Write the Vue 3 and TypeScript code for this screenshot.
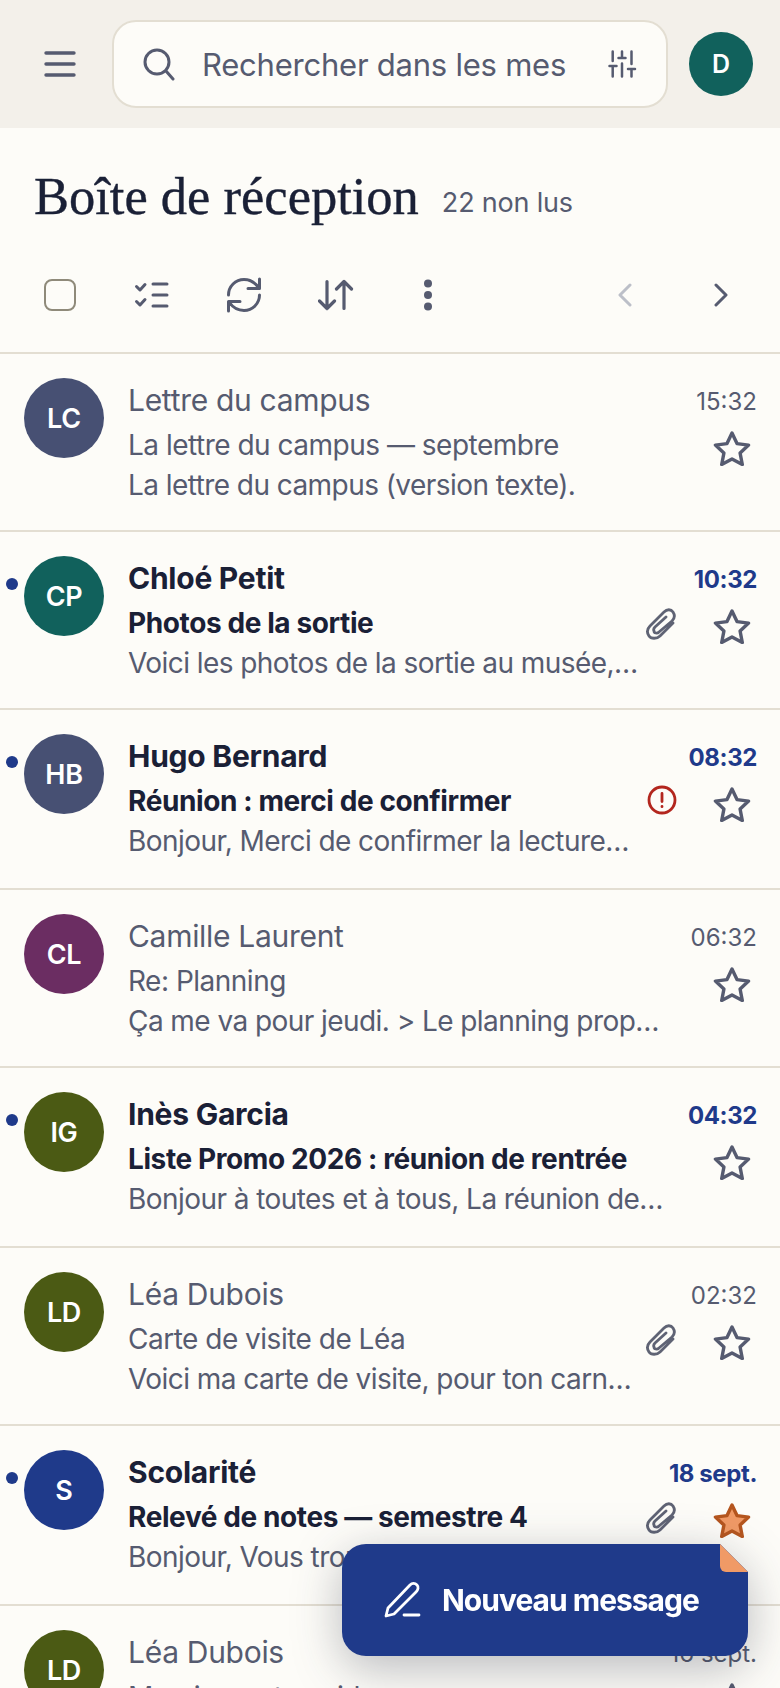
<template>
  <div class="app">
    <header class="topbar">
      <button class="icon-btn menu" aria-label="Menu">
        <svg width="32" height="28" viewBox="0 0 32 28"><path d="M2 3h28M2 14h28M2 25h28" stroke="#565b70" stroke-width="3.4" stroke-linecap="round" fill="none" /></svg>
      </button>
      <div class="search">
        <svg width="34" height="34" viewBox="0 0 34 34" fill="none" stroke="#565b70" stroke-width="3" stroke-linecap="round"><circle cx="15" cy="15" r="12" /><path d="M24 24l7 8" /></svg>
        <span class="search-text">Rechercher dans les mes</span>
        <svg class="sliders" width="30" height="28" viewBox="0 0 30 28" fill="none" stroke="#565b70" stroke-width="2.5" stroke-linecap="round"><path d="M4.7 1.500v9.500M1.500 16h7M4.700 16v10.500M14 1.500V8M10.500 8h7M14 13.500v13M23.500 1.500V14M20 19h7M23.500 19v7.500" /></svg>
      </div>
      <div class="me">D</div>
    </header>

    <section class="heading">
      <h1>Boîte de réception</h1>
      <span class="unread">22 non lus</span>
    </section>

    <div class="toolbar">
      <span class="tool"><span class="checkbox"></span></span>
      <span class="tool">
        <svg width="36" height="28" viewBox="0 0 36 28" fill="none" stroke="#565b70" stroke-width="3" stroke-linecap="round" stroke-linejoin="round"><path d="M2.500 5.500L6 9l5-5.500M2.500 20.500L6 24l5-5.500M19 3h14M19 14h14M19 25h14" /></svg>
      </span>
      <span class="tool">
        <svg width="36" height="36" viewBox="0 0 36 36" fill="none" stroke="#565b70" stroke-width="3" stroke-linecap="round" stroke-linejoin="round"><path d="M2.500 18C2.500 9.500 9.500 2.500 18 2.500c6.500 0 11.500 3.500 15 8.500M33.500 18c0 8.500-7 15.500-15.500 15.500-6.500 0-11.500-3.500-15-8.500M33.500 2v9.500H22M2.500 34V24.500H14" /></svg>
      </span>
      <span class="tool">
        <svg width="36" height="32" viewBox="0 0 36 32" fill="none" stroke="#565b70" stroke-width="3.2" stroke-linecap="round" stroke-linejoin="round"><path d="M9 2.500v27M1.500 22L9 29.500 16.500 22M26 29.500v-27M18.500 10L26 2.500 33.500 10" /></svg>
      </span>
      <span class="tool">
        <svg width="10" height="32" viewBox="0 0 10 32" fill="#565b70"><circle cx="5" cy="4.500" r="4" /><circle cx="5" cy="16" r="4" /><circle cx="5" cy="27.500" r="4" /></svg>
      </span>
      <span class="pager">
        <svg width="14" height="24" viewBox="0 0 14 24" fill="none" stroke="#bcbfc8" stroke-width="3" stroke-linecap="round" stroke-linejoin="round"><path d="M12 2L2 12l10 10" /></svg>
        <svg width="14" height="24" viewBox="0 0 14 24" fill="none" stroke="#565b70" stroke-width="3" stroke-linecap="round" stroke-linejoin="round"><path d="M2 2l10 10L2 22" /></svg>
      </span>
    </div>

    <ul class="list">
      <li v-for="m in messages" :key="m.name + m.time" class="row" :class="{ unread: m.unread, marked: m.attach || m.flag }">
        <span v-if="m.unread" class="dot"></span>
        <div class="avatar" :style="{ background: m.color }">{{ m.initials }}</div>
        <div class="main">
          <div class="name">{{ m.name }}</div>
          <div class="subject">{{ m.subject }}</div>
          <div class="preview">{{ m.preview }}</div>
        </div>
        <div class="side">
          <div class="time">{{ m.time }}</div>
          <div class="marks">
            <svg v-if="m.attach" class="clip" width="32" height="32" viewBox="0 0 32 32" fill="none" stroke="#5f6374" stroke-width="2.8" stroke-linecap="round" stroke-linejoin="round"><path d="M28 15L15 28c-3 3-9 3-11 0s-2-7 1-10L19 4c3-3 7-3 9 0s2 6-1 9L14 24c-2 2-5 1-5-1-1-2 0-3 1-4l11-10" /></svg>
            <svg v-if="m.flag" class="flag" width="30" height="30" viewBox="0 0 30 30" fill="none" stroke="#b3261e" stroke-width="2.8" stroke-linecap="round"><circle cx="15" cy="15" r="13" /><path d="M15 8.500v8M15 21.500v.2" /></svg>
            <svg class="star" width="38" height="36" viewBox="0 0 38 36" stroke-width="3.4" stroke-linejoin="round" :fill="m.starred ? '#f09a66' : 'none'" :stroke="m.starred ? '#b5561f' : '#565b70'"><path d="M19 3l5 10.600 11.600 1.500-8.500 8 2.200 11.400L19 28.900 8.700 34.500l2.200-11.400-8.500-8L14 13.600z" /></svg>
          </div>
        </div>
      </li>
    </ul>

    <div class="fab-wrap">
      <button class="fab">
        <svg width="38" height="38" viewBox="0 0 38 38" fill="none" stroke="#fff" stroke-width="2.8" stroke-linecap="round" stroke-linejoin="round"><path d="M2 35l2-8L26 4c2-2 5-2 7 0s1 5-1 7L10 33zM20 34h15" /></svg>
        <span>Nouveau message</span>
        <span class="fold"></span>
      </button>
    </div>
  </div>
</template>

<script setup lang="ts">
interface Message {
  name: string;
  initials: string;
  color: string;
  subject: string;
  preview: string;
  time: string;
  unread?: boolean;
  attach?: boolean;
  flag?: boolean;
  starred?: boolean;
}

const slate = '#475073';
const teal = '#11615c';
const plum = '#6b2d62';
const olive = '#4b5a14';
const blue = '#1f3a8a';

const messages: Message[] = [
  { name: 'Lettre du campus', initials: 'LC', color: slate, subject: 'La lettre du campus — septembre', preview: 'La lettre du campus (version texte).', time: '15:32' },
  { name: 'Chloé Petit', initials: 'CP', color: teal, subject: 'Photos de la sortie', preview: 'Voici les photos de la sortie au musée,…', time: '10:32', unread: true, attach: true },
  { name: 'Hugo Bernard', initials: 'HB', color: slate, subject: 'Réunion : merci de confirmer', preview: 'Bonjour, Merci de confirmer la lecture…', time: '08:32', unread: true, flag: true },
  { name: 'Camille Laurent', initials: 'CL', color: plum, subject: 'Re: Planning', preview: 'Ça me va pour jeudi. > Le planning proposé me convient', time: '06:32' },
  { name: 'Inès Garcia', initials: 'IG', color: olive, subject: 'Liste Promo 2026 : réunion de rentrée', preview: 'Bonjour à toutes et à tous, La réunion de rentrée aura lieu', time: '04:32', unread: true },
  { name: 'Léa Dubois', initials: 'LD', color: olive, subject: 'Carte de visite de Léa', preview: 'Voici ma carte de visite, pour ton carnet d’adresses', time: '02:32', attach: true },
  { name: 'Scolarité', initials: 'S', color: blue, subject: 'Relevé de notes — semestre 4', preview: 'Bonjour, Vous trouverez ci-joint votre relevé de notes', time: '18 sept.', unread: true, attach: true, starred: true },
  { name: 'Léa Dubois', initials: 'LD', color: olive, subject: 'Merci pour ton aide', preview: 'Merci encore pour ton aide', time: '16 sept.' }
];
</script>

<style>
html, body { background: #fdfcf8; }
</style>

<style scoped>
.app {
  position: relative;
  width: 780px;
  height: 1688px;
  overflow: hidden;
  background: #fdfcf8;
  font-family: Inter, "Liberation Sans", sans-serif;
  color: #1a2036;
}
.topbar {
  display: flex;
  align-items: center;
  height: 128px;
  background: #f3f0ea;
  padding: 0 27px 0 44px;
  box-sizing: border-box;
}
.icon-btn {
  border: 0;
  padding: 0;
  background: none;
  display: flex;
}
.menu { margin-right: 36px; }
.search {
  flex: 1;
  height: 88px;
  box-sizing: border-box;
  display: flex;
  align-items: center;
  gap: 26px;
  padding: 0 28px;
  background: #fdfcf8;
  border: 2px solid #e3ded2;
  border-radius: 24px;
}
.search-text {
  flex: 1;
  font-size: 31px;
  letter-spacing: -0.23px;
  color: #565b70;
  white-space: nowrap;
  overflow: hidden;
}
.me {
  width: 64px;
  height: 64px;
  margin-left: 21px;
  border-radius: 50%;
  background: #11615c;
  color: #fff;
  font-size: 25px;
  font-weight: 600;
  display: flex;
  align-items: center;
  justify-content: center;
}
.heading {
  display: flex;
  align-items: flex-start;
  gap: 23px;
  padding: 36px 32px 0 34px;
  height: 100px;
  box-sizing: border-box;
}
h1 {
  margin: 0;
  font-family: "Liberation Serif", serif;
  font-weight: 400;
  font-size: 52.5px;
  line-height: 64px;
  color: #1a2036;
  -webkit-text-stroke: 0.4px #1a2036;
}
.heading .unread {
  margin-top: 21px;
  font-size: 27px;
  line-height: 36px;
  letter-spacing: -0.2px;
  font-weight: 400;
  color: #565b70;
}
.toolbar {
  display: flex;
  align-items: center;
  height: 126px;
  padding: 10px 52px 0 14px;
  box-sizing: border-box;
  border-bottom: 2px solid #e3ded2;
}
.tool {
  width: 92px;
  display: flex;
  justify-content: center;
  align-items: center;
}
.checkbox {
  width: 32px;
  height: 32px;
  box-sizing: border-box;
  border: 2px solid #8f8a7a;
  border-radius: 8px;
}
.pager {
  margin-left: auto;
  display: flex;
  gap: 82px;
}
.list {
  list-style: none;
  margin: 0;
  padding: 0;
}
.row {
  position: relative;
  display: flex;
  gap: 24px;
  height: 178px;
  box-sizing: border-box;
  padding: 24px 24px 0;
  border-bottom: 2px solid #e3ded2;
}
.row.unread { height: 180px; }
.row:nth-child(2) { height: 178px; }
.dot {
  position: absolute;
  left: 6px;
  top: 46px;
  width: 12px;
  height: 12px;
  border-radius: 50%;
  background: #1f3a8a;
}
.avatar {
  flex: none;
  width: 80px;
  height: 80px;
  border-radius: 50%;
  color: #fff;
  font-size: 27px;
  font-weight: 600;
  letter-spacing: -0.3px;
  display: flex;
  align-items: center;
  justify-content: center;
}
.main {
  flex: 1;
  min-width: 0;
  padding-top: 2px;
  color: #565b70;
}
.row.marked .main { margin-right: 20px; }
.name {
  font-size: 30px;
  letter-spacing: -0.3px;
  line-height: 40px;
  margin-bottom: 5px;
  white-space: nowrap;
}
.subject, .preview {
  font-size: 28px;
  letter-spacing: -0.5px;
  line-height: 40px;
  white-space: nowrap;
  overflow: hidden;
  text-overflow: ellipsis;
}
.preview { letter-spacing: -0.56px; }
.row.unread .name, .row.unread .subject {
  font-weight: 700;
  color: #1a2036;
}
.row.unread .name { letter-spacing: -0.25px; }
.row.unread .subject { letter-spacing: -0.4px; }
.side {
  flex: none;
  width: 68px;
  display: flex;
  flex-direction: column;
  align-items: flex-end;
}
.time {
  font-size: 24px;
  line-height: 40px;
  padding-top: 4px;
  margin-right: -1px;
  color: #565b70;
  white-space: nowrap;
}
.row.unread .time {
  font-weight: 700;
  letter-spacing: -0.4px;
  color: #1f3a8a;
}
.marks {
  display: flex;
  align-items: flex-start;
  justify-content: flex-end;
  gap: 36px;
  position: relative;
  margin-top: 8px;
  margin-right: 5px;
}
.clip { margin-top: 0; }
.flag { margin-top: -1px; }
.fab-wrap {
  position: absolute;
  left: 342px;
  top: 1544px;
  filter: drop-shadow(0 12px 24px rgba(26, 32, 54, 0.3));
}
.fab {
  position: relative;
  width: 406px;
  height: 112px;
  display: flex;
  align-items: center;
  gap: 20px;
  padding: 0 0 0 42px;
  box-sizing: border-box;
  border: 0;
  background: #1f3a8a;
  color: #fff;
  font-family: Inter, "Liberation Sans", sans-serif;
  font-size: 30px;
  font-weight: 700;
  letter-spacing: -1px;
  clip-path: path('M24 0H378L406 28V88a24 24 0 0 1-24 24H24a24 24 0 0 1-24-24V24a24 24 0 0 1 24-24z');
}
.fold {
  position: absolute;
  right: 0;
  top: 0;
  width: 28px;
  height: 28px;
  background: #f09a66;
  border-bottom-left-radius: 6px;
}
</style>
